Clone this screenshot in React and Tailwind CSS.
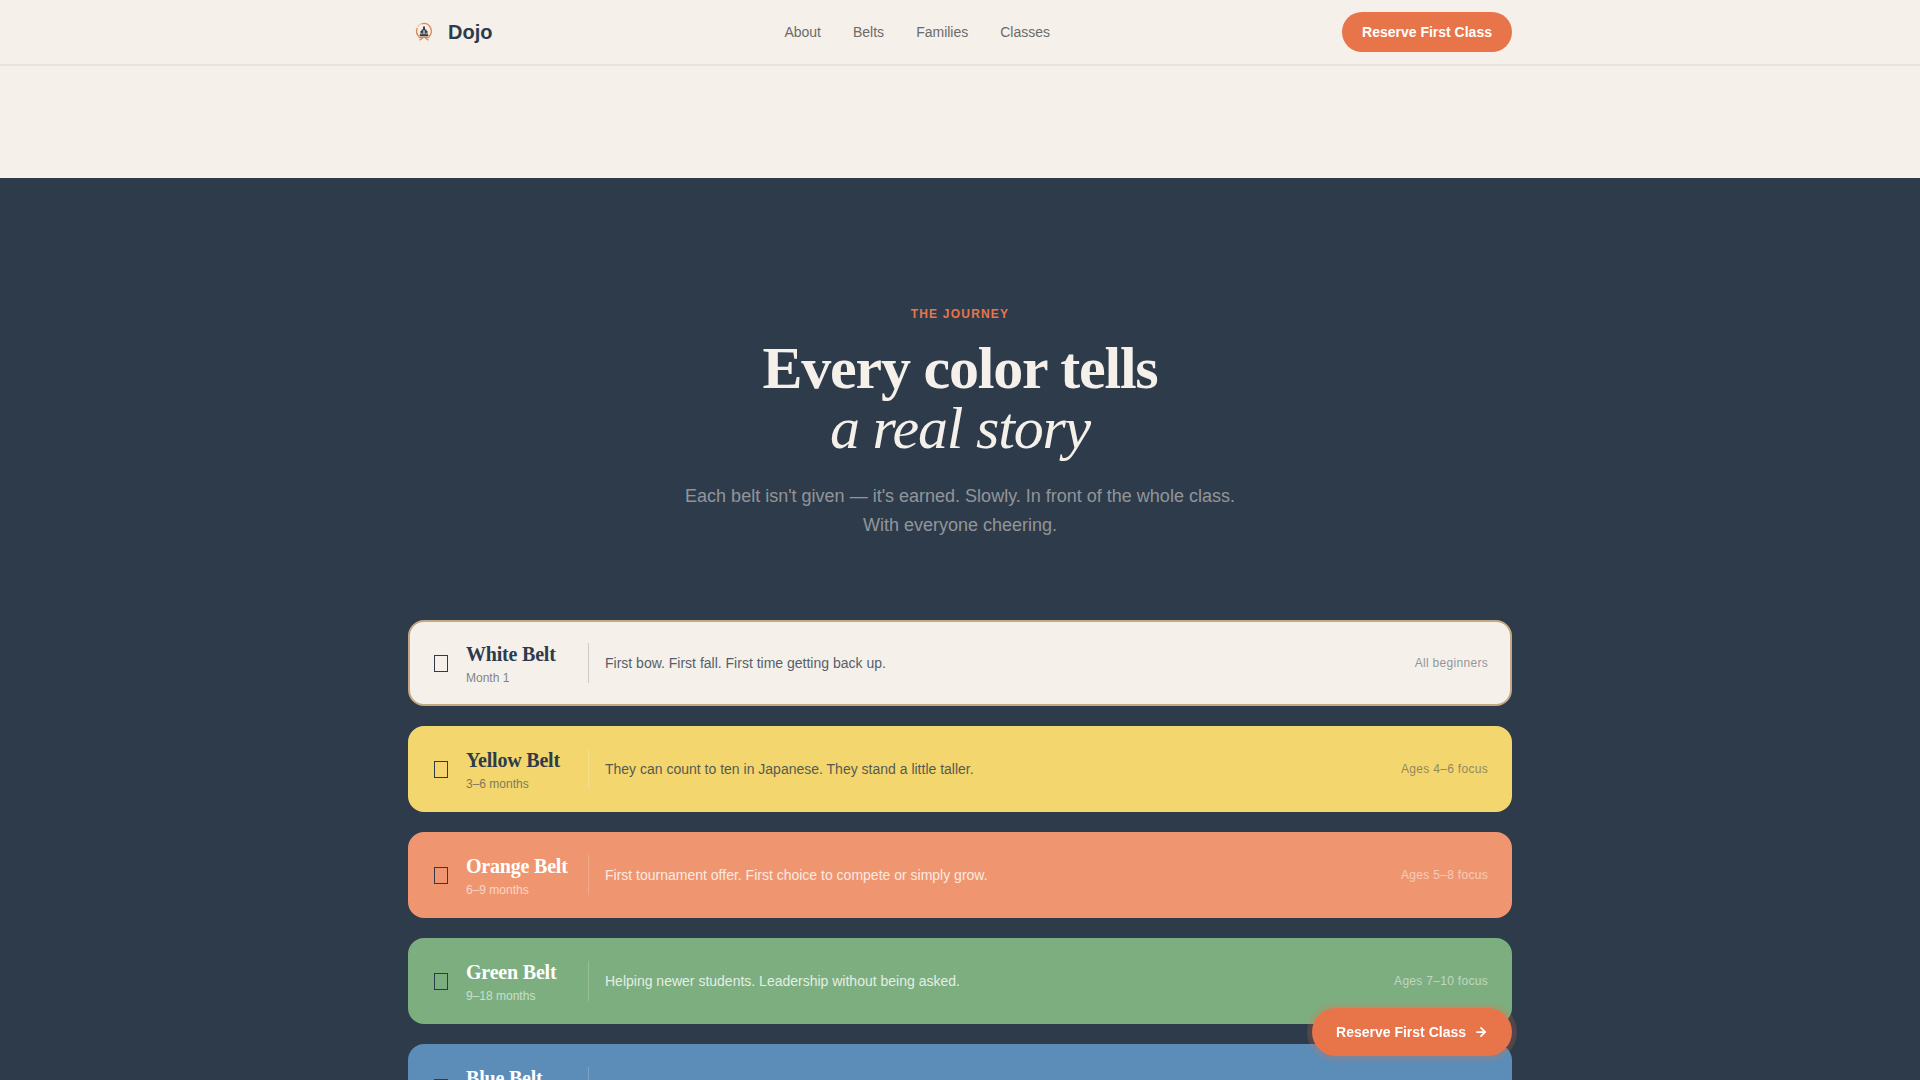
import React from "react";
import { ArrowRight } from "lucide-react";

const NAV_LINKS = ["About", "Belts", "Families", "Classes"];

const BELTS = [
  {
    name: "White Belt",
    time: "Month 1",
    text: "First bow. First fall. First time getting back up.",
    focus: "All beginners",
    card: "bg-[#f5f0ea] border-[#c4a882] text-[#2d3b4b]",
    line: "bg-[#2d3b4b]/20",
  },
  {
    name: "Yellow Belt",
    time: "3–6 months",
    text: "They can count to ten in Japanese. They stand a little taller.",
    focus: "Ages 4–6 focus",
    card: "bg-[#f4d66f] border-[#f4d66f] text-[#2d3b4b]",
    line: "bg-white/20",
  },
  {
    name: "Orange Belt",
    time: "6–9 months",
    text: "First tournament offer. First choice to compete or simply grow.",
    focus: "Ages 5–8 focus",
    card: "bg-[#ef9670] border-[#ef9670] text-white",
    line: "bg-white/20",
  },
  {
    name: "Green Belt",
    time: "9–18 months",
    text: "Helping newer students. Leadership without being asked.",
    focus: "Ages 7–10 focus",
    card: "bg-[#7cae7f] border-[#7cae7f] text-white",
    line: "bg-white/20",
  },
  {
    name: "Blue Belt",
    time: "18–30 months",
    text: "Discipline becomes habit. Habit becomes character.",
    focus: "Ages 8–12 focus",
    card: "bg-[#5b8db8] border-[#5b8db8] text-white",
    line: "bg-white/20",
  },
];

const Logo = () => (
  <svg className="w-8 h-8" viewBox="0 0 32 32" fill="none" aria-hidden="true">
    <path d="M11 20.5a7.6 7.6 0 0 1-1.8-8.5M13.5 7.8a7.6 7.6 0 0 1 7.5 12.7" stroke="#e08a50" strokeWidth="1.4" />
    <path d="M9.8 10.6l1-1.2M11.6 8.8l1.2-.7" stroke="#e8b48c" strokeWidth="1.2" />
    <path d="M10.5 21.4h11M11.5 24.2l3.5-2.6M20.5 24.2L17 21.6" stroke="#e08a50" strokeWidth="1.4" />
    <path d="M15 10.5h2v3h1.5v1.5h1v3.5h.8v1.7h-8.6v-1.7h.8V15h1v-1.5H15z" fill="#2d3b4b" />
    <path d="M15.2 14.2h1.6v4h-1.6z" fill="#d9c3a8" />
    <path d="M13.5 16.8h.8v1.6h-.8zM17.7 16.8h.8v1.6h-.8z" fill="#f5f0ea" />
  </svg>
);

const BeltCard = ({ belt }) => (
  <li className={`flex items-center gap-4 rounded-2xl border-2 px-[22px] py-5 ${belt.card}`}>
    <span className="w-[18px] flex justify-center shrink-0">
      <span className="w-[14px] h-[17px] border border-[#2d3b4b]" />
    </span>
    <div className="w-[106px] shrink-0">
      <h3 className="font-['Liberation_Serif',serif] text-xl leading-6 font-bold tracking-[-0.01em]">{belt.name}</h3>
      <p className="mt-1.5 text-xs leading-3 opacity-60">{belt.time}</p>
    </div>
    <div className={`w-px h-10 shrink-0 ${belt.line}`} />
    <p className="flex-1 text-sm leading-5 opacity-80">{belt.text}</p>
    <span className="text-xs leading-4 tracking-wide opacity-50">{belt.focus}</span>
  </li>
);

const App = () => {
  return (
    <div className="h-screen overflow-y-auto [scrollbar-width:none] bg-[#f5f0ea] font-['Liberation_Sans',Arial,sans-serif]">
      {/* Header */}
      <header className="sticky top-0 z-10 bg-[#f5f0ea] border-b-2 border-[#eae3dc]">
        <div className="max-w-6xl mx-auto px-6 h-16 flex items-center justify-between">
          <a href="#top" className="flex items-center gap-2">
            <Logo />
            <span className="text-xl font-bold text-[#2d3b4b]">Dojo</span>
          </a>
          <nav className="flex items-center gap-8">
            {NAV_LINKS.map((link) => (
              <a key={link} href={`#${link.toLowerCase()}`} className="text-sm text-[#6b6b6b]">
                {link}
              </a>
            ))}
          </nav>
          <button className="h-10 px-5 rounded-full bg-[#e8744a] text-white text-sm font-bold">
            Reserve First Class
          </button>
        </div>
      </header>

      {/* Belt journey */}
      <main className="pt-28">
        <section id="belts" className="bg-[#2d3b4b] py-32">
          <div className="max-w-6xl mx-auto px-6">
            <div className="text-center mb-20">
              <p className="text-xs leading-4 font-bold tracking-widest uppercase text-[#e8744a] mb-4">The Journey</p>
              <h2 className="font-['Liberation_Serif',serif] text-6xl leading-[60px] font-bold tracking-[-0.02em] text-[#f5f0ea]">
                Every color tells
                <br />
                <em className="font-normal">a real story</em>
              </h2>
              <p className="mt-6 mx-auto max-w-xl text-lg leading-[29px] text-[#f5f0ea]/50">
                Each belt isn't given — it's earned. Slowly. In front of the whole class. With everyone cheering.
              </p>
            </div>
            <ul className="flex flex-col gap-5">
              {BELTS.map((belt) => (
                <BeltCard key={belt.name} belt={belt} />
              ))}
            </ul>
          </div>
        </section>
      </main>

      {/* Floating button */}
      <div className="fixed inset-x-0 bottom-6 z-20">
        <div className="max-w-6xl mx-auto px-6 flex justify-end">
          <button className="h-12 px-6 flex items-center gap-2 rounded-full bg-[#e8744a] text-white text-sm font-bold ring-5 ring-[#e8744a]/20">
            Reserve First Class
            <ArrowRight className="w-3.5 h-3.5" strokeWidth={3} />
          </button>
        </div>
      </div>
    </div>
  );
};

export default App;
